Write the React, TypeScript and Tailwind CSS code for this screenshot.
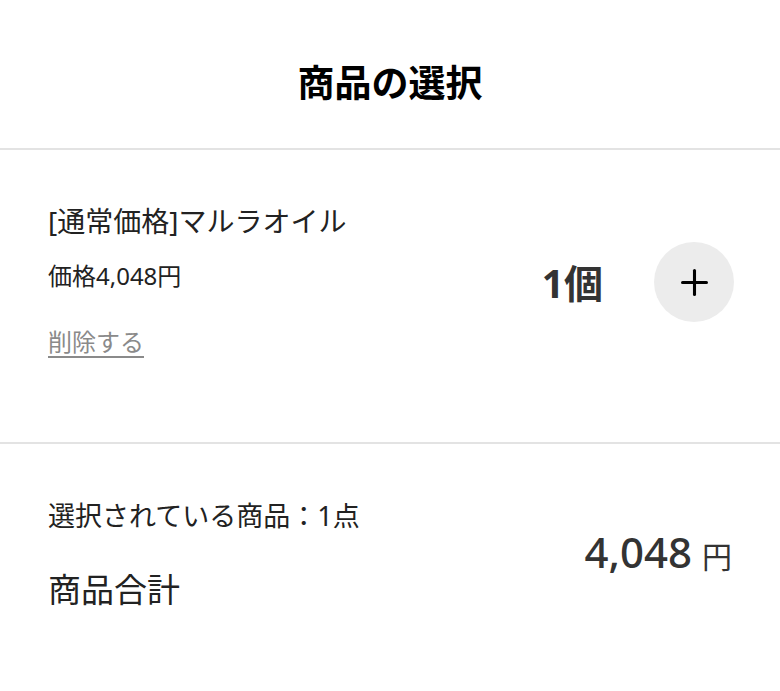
import { Plus } from "lucide-react";

const font = { fontFamily: '"Noto Sans", "Noto Sans CJK JP", sans-serif' };

export default function App() {
  return (
    <div className="w-[780px] h-[691px] bg-white text-[#222]" style={font}>
      <header className="h-[148px] pt-[16px] flex items-center justify-center">
        <h1 className="text-[37px] font-bold text-black leading-none">商品の選択</h1>
      </header>
      <div className="h-[2px] bg-[#e3e3e3]" />

      <section className="h-[292px] px-[48px] pt-[57px] flex justify-between">
        <div>
          <p className="text-[28px] leading-none">[通常価格]マルラオイル</p>
          <p className="mt-[29px] text-[24px] leading-none">価格4,048円</p>
          <button className="block mt-[42px] text-[24px] leading-none text-[#8a8a8a] underline underline-offset-[5px]">
            削除する
          </button>
        </div>
        <div className="flex items-center gap-[51px] h-[80px] mt-[35px] -mr-[2px]">
          <span className="text-[39px] font-bold text-[#333] leading-none">1個</span>
          <button className="w-[80px] h-[80px] rounded-full bg-[#ececec] flex items-center justify-center">
            <Plus className="w-[41px] h-[41px] text-black" strokeWidth={1.8} />
          </button>
        </div>
      </section>
      <div className="h-[2px] bg-[#e3e3e3]" />

      <section className="px-[48px] pt-[58px] flex justify-between">
        <div>
          <p className="text-[27px] leading-none">選択されている商品：1点</p>
          <p className="mt-[44px] text-[33px] leading-none">商品合計</p>
        </div>
        <div className="flex items-baseline gap-[10px] mt-[29px] text-[#333]">
          <span className="text-[42px] leading-none font-medium">4,048</span>
          <span className="text-[30px] leading-none">円</span>
        </div>
      </section>
    </div>
  );
}
